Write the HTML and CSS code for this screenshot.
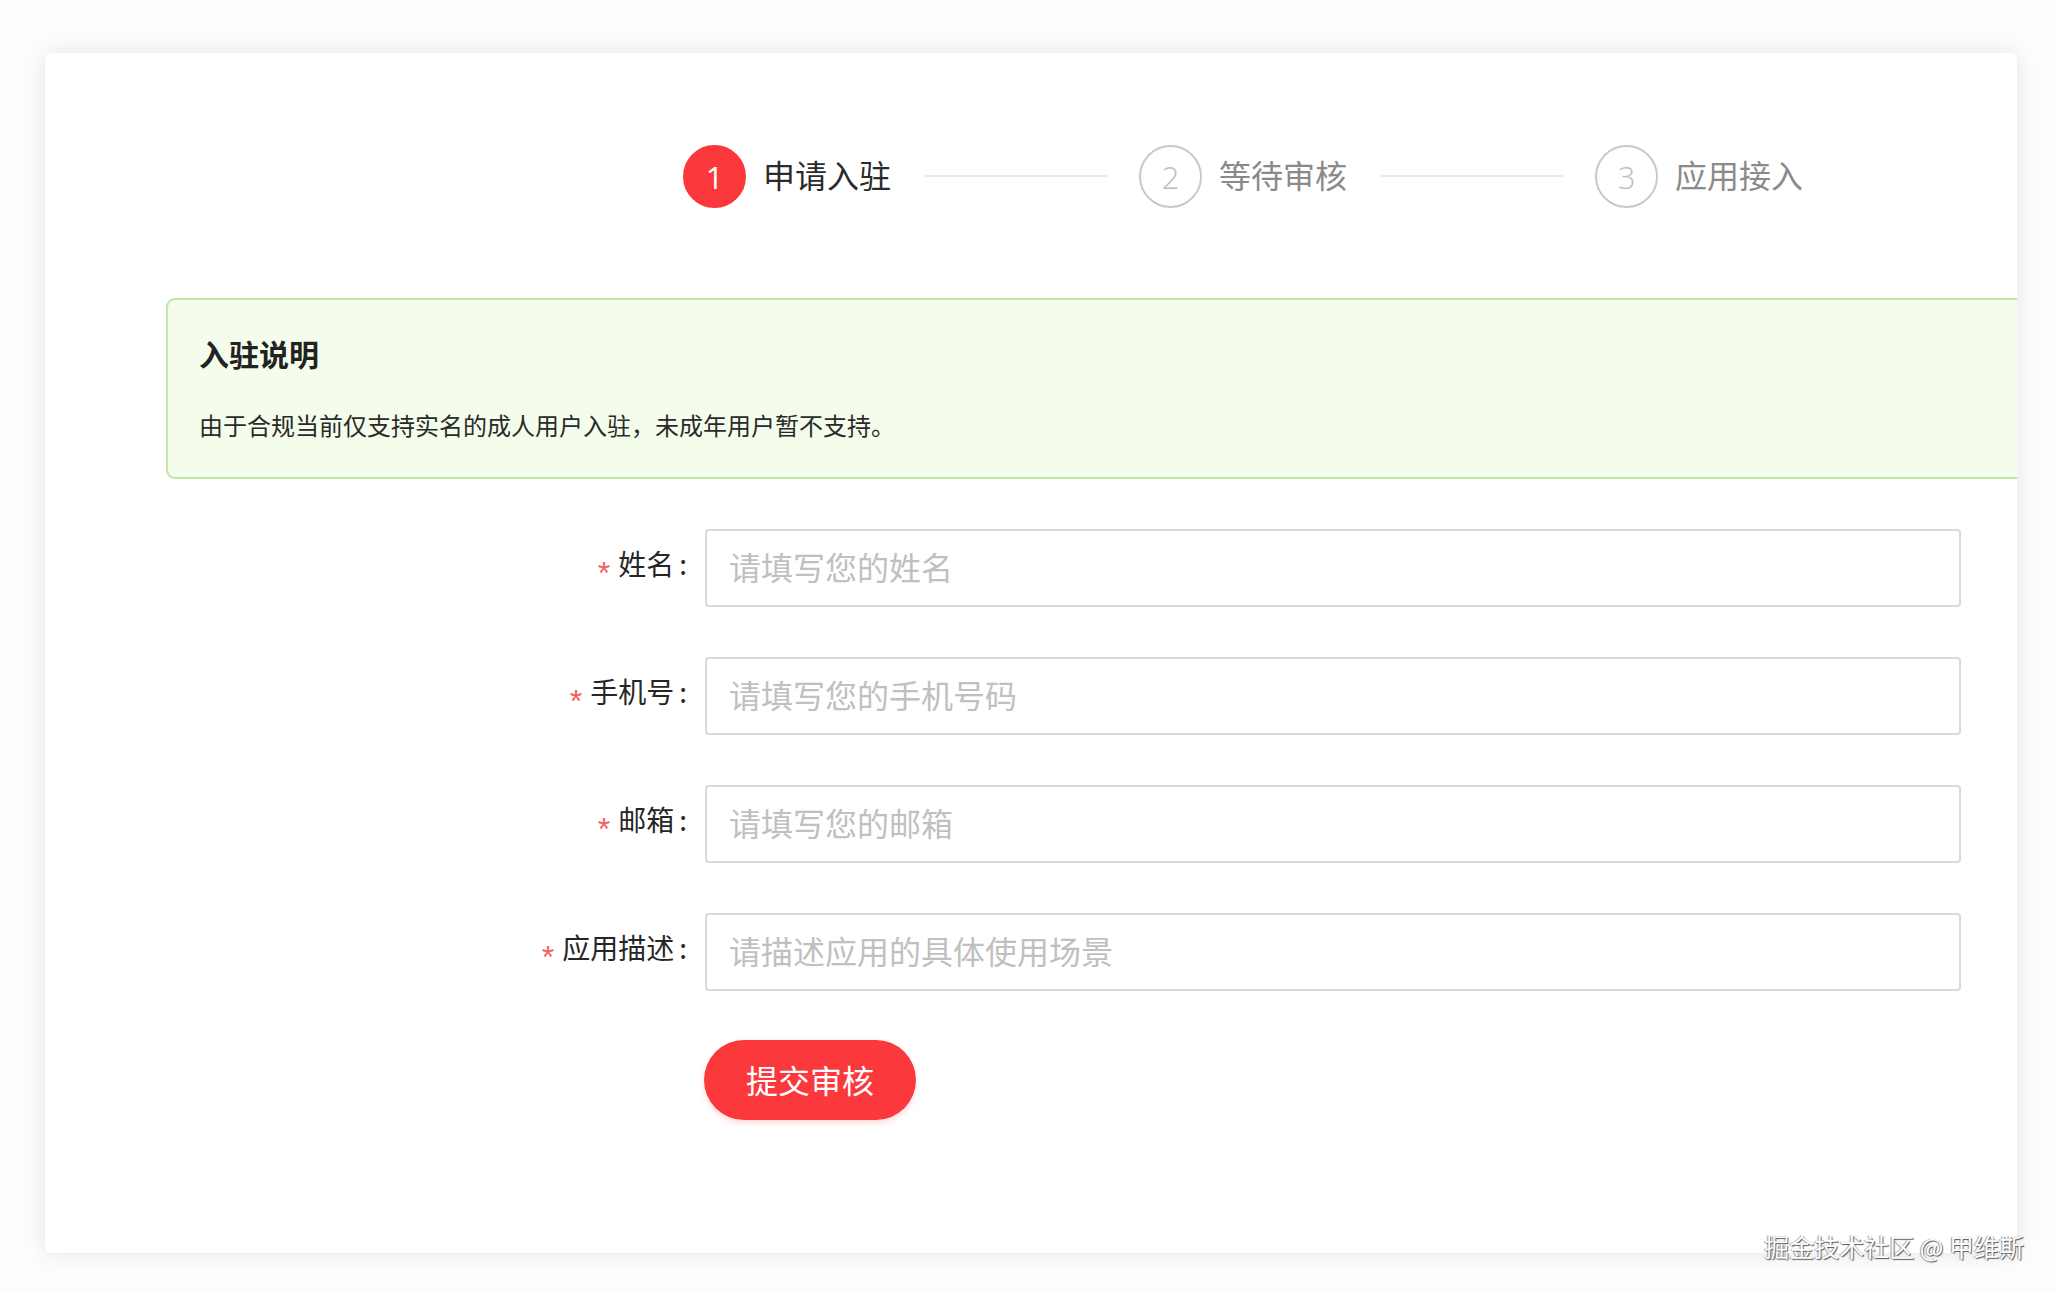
FILE: index.html
```html
<!DOCTYPE html>
<html lang="zh-CN">
<head>
<meta charset="utf-8">
<title>申请入驻</title>
<link rel="stylesheet" href="styles.css">
</head>
<body>
<div class="page">
  <div class="card">
    <div class="steps">
      <div class="step active">
        <span class="step-num">1</span>
        <span class="step-title">申请入驻</span>
      </div>
      <span class="step-line"></span>
      <div class="step">
        <span class="step-num">2</span>
        <span class="step-title">等待审核</span>
      </div>
      <span class="step-line"></span>
      <div class="step">
        <span class="step-num">3</span>
        <span class="step-title">应用接入</span>
      </div>
    </div>

    <div class="notice">
      <h2 class="notice-title">入驻说明</h2>
      <p class="notice-text">由于合规当前仅支持实名的成人用户入驻，未成年用户暂不支持。</p>
    </div>

    <form class="form">
      <div class="form-row">
        <label class="form-label"><span class="req">*</span>姓名<span class="colon">:</span></label>
        <input class="form-input" type="text" placeholder="请填写您的姓名">
      </div>
      <div class="form-row">
        <label class="form-label"><span class="req">*</span>手机号<span class="colon">:</span></label>
        <input class="form-input" type="text" placeholder="请填写您的手机号码">
      </div>
      <div class="form-row">
        <label class="form-label"><span class="req">*</span>邮箱<span class="colon">:</span></label>
        <input class="form-input" type="text" placeholder="请填写您的邮箱">
      </div>
      <div class="form-row">
        <label class="form-label"><span class="req">*</span>应用描述<span class="colon">:</span></label>
        <input class="form-input" type="text" placeholder="请描述应用的具体使用场景">
      </div>
      <div class="form-actions">
        <button class="submit" type="button">提交审核</button>
      </div>
    </form>
  </div>
  <div class="watermark">掘金技术社区 @ 甲维斯</div>
</div>
</body>
</html>
```

FILE: styles.css
```css
* {
  box-sizing: border-box;
}

html, body {
  margin: 0;
  padding: 0;
  background: #fdfdfd;
  font-family: "Noto Sans CJK SC", "Noto Sans", sans-serif;
}

.page {
  position: relative;
  width: 2056px;
  height: 1292px;
  padding: 53px 39px 39px 45px;
}

.card {
  width: 1972px;
  height: 1200px;
  background: #fff;
  border-radius: 6px;
  overflow: hidden;
  box-shadow: 0 0 24px rgba(0, 0, 0, 0.10);
  padding-top: 91px;
}

/* steps */
.steps {
  display: flex;
  align-items: center;
  margin-left: 638px;
  height: 64px;
}

.step {
  display: flex;
  align-items: center;
  gap: 17px;
}

.step-num {
  width: 63px;
  height: 63px;
  border-radius: 50%;
  border: 2px solid #c9c9c9;
  color: #bdbdbd;
  font-family: "Open Sans", "Noto Sans", sans-serif;
  font-weight: 300;
  font-size: 31px;
  line-height: 1;
  display: flex;
  align-items: center;
  justify-content: center;
  padding-top: 2px;
}

.step-title {
  font-size: 32px;
  line-height: 1;
  color: #8a8a8a;
  padding-bottom: 4px;
}

.step.active .step-num {
  background: #fb383b;
  border-color: #fb383b;
  color: #fff;
  font-weight: 400;
}

.step.active .step-title {
  color: #2b2b2b;
}

.step-line {
  width: 182px;
  height: 2px;
  background: #e8e8e8;
  margin: 0 32px 0 34px;
}

/* notice */
.notice {
  margin: 90px -12px 0 121px;
  height: 181px;
  border: 2px solid #bfe6a4;
  border-radius: 9px;
  background: #f4fdeb;
  padding: 38px 31px 0;
}

.notice-title {
  margin: 0;
  font-size: 30px;
  line-height: 30px;
  font-weight: 700;
  color: #222;
}

.notice-text {
  margin: 45px 0 0;
  font-size: 24px;
  line-height: 24px;
  color: #2a2a2a;
}

/* form */
.form {
  margin-top: 50px;
  display: flex;
  flex-direction: column;
  gap: 50px;
}

.form-row {
  display: flex;
  align-items: center;
}

.form-label {
  width: 642px;
  text-align: right;
  font-size: 28px;
  line-height: 1;
  color: #262626;
  margin-right: 18px;
  padding-top: 2px;
}

.colon {
  margin-left: 5px;
}

.req {
  color: #f25f62;
  font-family: "Liberation Sans", sans-serif;
  font-size: 32px;
  margin-right: 8px;
  vertical-align: -9px;
}

.form-input {
  width: 1256px;
  height: 78px;
  border: 2px solid #dadada;
  border-radius: 4px;
  padding: 0 22px 4px;
  font-family: "Noto Sans CJK SC", "Noto Sans", sans-serif;
  font-size: 32px;
  color: #333;
  background: #fff;
  outline: none;
}

.form-input::placeholder {
  color: #c0c0c0;
}

.form-actions {
  display: flex;
  padding-left: 659px;
  margin-top: -1px;
}

.submit {
  width: 212px;
  height: 80px;
  border: none;
  border-radius: 40px;
  background: #fb383b;
  color: #fff;
  font-family: "Noto Sans CJK SC", "Noto Sans", sans-serif;
  font-size: 32px;
  line-height: 1;
  padding-bottom: 4px;
  box-shadow: 0 3px 6px rgba(251, 56, 59, 0.18);
  cursor: pointer;
}

/* watermark overlay */
.watermark {
  position: absolute;
  right: 32px;
  bottom: 33px;
  font-size: 25px;
  line-height: 1;
  color: #fff;
  text-shadow: 1px 1px 1px #555, -1px 0 1px #999;
  white-space: nowrap;
}
```
